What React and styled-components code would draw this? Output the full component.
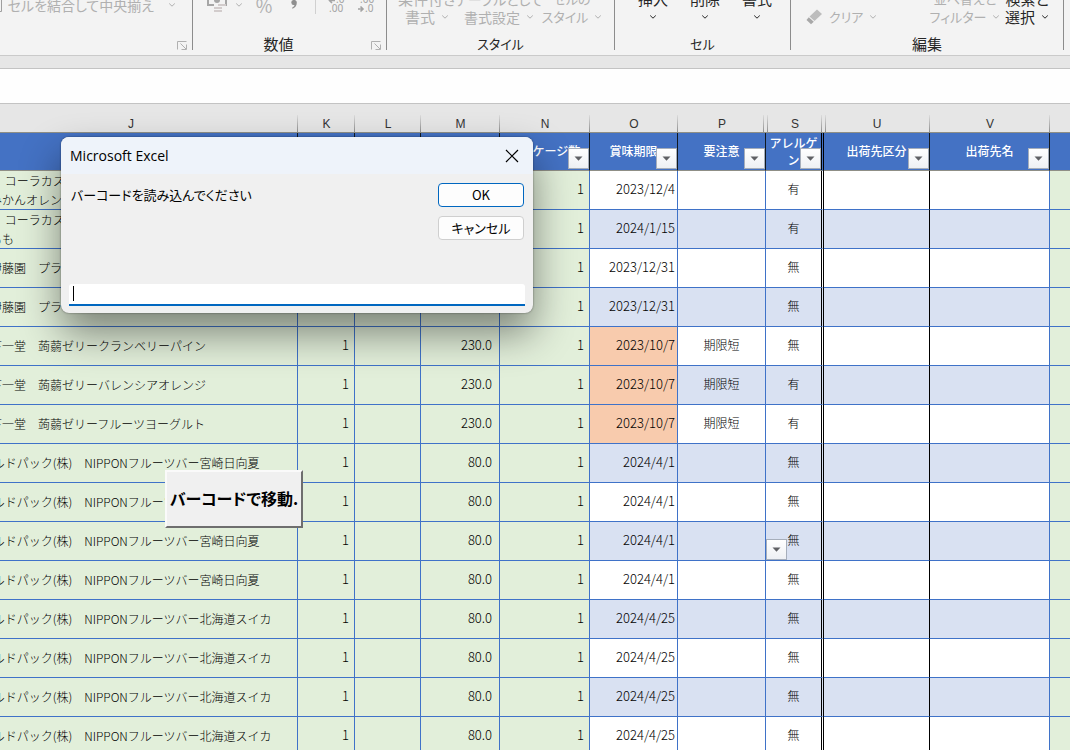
import React from "react";
import styled, { createGlobalStyle, css } from "styled-components";

const GlobalStyles = createGlobalStyle`
  html {
    --line: #3f72c8;
    --head: #4472c4;
    --green: #e2efda;
    --band: #d9e1f2;
    --peach: #f8cbad;
    --chrome: #e6e6e6;
    --ribbon: #f3f3f3;
    --muted: #b0b0b0;
    box-sizing: border-box;
  }
  *, *:before, *:after {
    box-sizing: inherit;
  }
  body {
    margin: 0;
    overflow: hidden;
    font-family: "Noto Sans CJK JP", sans-serif;
    font-size: 12px;
    color: #262626;
  }
  button, input {
    font: inherit;
    color: inherit;
  }
`;

const PageStyles = styled.div`
  position: relative;
  height: 100vh;
  overflow: hidden;
  background: white;
`;

const RibbonStyles = styled.div`
  display: flex;
  height: 56px;
  background: var(--ribbon);
  border-bottom: 1px solid #cacaca;
`;

const GroupStyles = styled.section`
  position: relative;
  display: flex;
  flex-direction: column;
  justify-content: flex-end;
  flex: none;
  width: ${(props) => props.$width}px;
  height: 50px;
  border-right: 1px solid #8c8c8c;
  &:first-child {
    margin-left: -238px;
  }
  h2 {
    margin: 0;
    /* leaves room for the launcher in the corner */
    padding-right: ${(props) => (props.$launcher ? 22 : 0)}px;
    font-size: ${(props) => (props.$kana ? 13 : 15)}px;
    font-weight: 400;
    line-height: 12px;
    text-align: center;
    font-feature-settings: "palt";
  }
`;

const ToolsStyles = styled.div`
  display: flex;
  align-items: ${(props) => (props.$high ? "center" : "flex-end")};
  justify-content: ${(props) => props.$justify || "flex-start"};
  padding: 0 ${(props) => props.$right || 0}px 0 ${(props) => props.$left || 0}px;
  margin-bottom: ${(props) => (props.$high ? 24 : 12)}px;
  gap: ${(props) => props.$gap || 0}px;
  height: 18px;
`;

const ToolPair = styled.span`
  display: flex;
  align-items: flex-end;
`;

const ToolButton = styled.button`
  display: flex;
  flex-direction: ${(props) => (props.$inline ? "row" : "column")};
  align-items: center;
  justify-content: center;
  gap: ${(props) => (props.$inline ? 6 : 0)}px;
  flex: none;
  width: ${(props) => (props.$width ? `${props.$width}px` : "auto")};
  padding: 0;
  border: 0;
  background: none;
  font-size: ${(props) => props.$size || 15}px;
  line-height: 18px;
  white-space: nowrap;
  font-feature-settings: "palt";
  color: ${(props) => (props.$muted ? "var(--muted)" : "#262626")};
  span {
    display: flex;
    align-items: center;
    justify-content: center;
    gap: ${(props) => (props.$wide ? 14 : 6)}px;
    height: 18px;
  }
  svg {
    flex: none;
  }
`;

const ToolDivider = styled.i`
  width: 1px;
  height: 40px;
  align-self: flex-end;
  background: #d0d0d0;
`;

const LauncherButton = styled.button`
  position: absolute;
  right: 4px;
  bottom: 0;
  display: flex;
  padding: 0;
  border: 0;
  background: none;
`;

const FormulaBar = styled.div`
  padding-top: 12px;
  background: var(--chrome);
  input {
    display: block;
    width: 100%;
    height: 36px;
    padding: 0 8px;
    border: 1px solid #c3c3c3;
    border-width: 1px 0;
    background: #fefefe;
    outline: 0;
  }
`;

const SheetStyles = styled.div`
  position: relative;
  margin-left: -36px;
  table {
    width: 100%;
    table-layout: fixed;
    border-collapse: separate;
    border-spacing: 0;
  }
  th:last-child,
  td:last-child {
    border-right: 0;
  }
`;

const separator = "linear-gradient(#dcdcdc, #8f8f8f)";

const LetterCell = styled.th`
  height: 29px;
  padding: 12px 0 0;
  border-bottom: 1px solid #8f8f86;
  background-color: var(--chrome);
  background-image: ${separator}${(props) => props.$after && `, ${separator}`};
  background-repeat: no-repeat;
  background-size: 1px 17px;
  background-position: right ${(props) => (props.$hidden ? 2 : 0)}px bottom 0,
    left ${(props) => (props.$after ? 1 : 0)}px bottom 0;
  font-family: "Liberation Sans", sans-serif;
  font-weight: 400;
  line-height: 16px;
  color: #333;
  &:last-child {
    background-image: none;
  }
`;

const HeadCell = styled.th`
  position: relative;
  height: 38px;
  padding: 0 0 2px;
  border-right: 1px solid #101820;
  border-bottom: 1px solid #8f8f86;
  background: var(--head);
  color: white;
  font-weight: 500;
  line-height: 17px;
  ${(props) =>
    props.$double &&
    css`
      border-right: 3px double black;
    `}
`;

const DropButton = styled.button`
  position: absolute;
  bottom: ${(props) => (props.$left ? 0 : 1)}px;
  ${(props) => (props.$left ? "left: 0;" : "right: 0;")}
  display: grid;
  place-items: center;
  width: 21px;
  height: 21px;
  padding: 0;
  border: 1px solid #a6aebb;
  background: linear-gradient(white, #eef0f4);
`;

const fills = {
  green: "var(--green)",
  peach: "var(--peach)",
  band: "var(--band)",
  white: "white",
};

const CellStyles = styled.td`
  position: relative;
  height: 39px;
  padding: 0 ${(props) => props.$pad || 0}px 2px;
  border-right: 1px solid ${(props) => (props.$dark ? "black" : "var(--line)")};
  border-bottom: 1px solid var(--line);
  background: ${(props) => fills[props.$fill]};
  color: black;
  font-size: ${(props) => (props.$number ? 13 : 12)}px;
  font-weight: 300;
  line-height: 18px;
  text-align: ${(props) => props.$align || "center"};
  ${(props) =>
    props.$double &&
    css`
      border-right: 3px double black;
    `}
`;

const NameCell = styled(CellStyles)`
  padding: 0 0 ${(props) => (props.$wrapped ? 0 : 2)}px 26px;
  line-height: 19px;
  text-align: left;
  white-space: pre;
  overflow: hidden;
`;

const MacroButton = styled.button`
  position: absolute;
  left: 201px;
  top: 366px;
  width: 138px;
  height: 58px;
  padding: 0 0 2px;
  border: 2px solid;
  border-color: #fafafa #6e6e6e #6e6e6e #fafafa;
  background: #f0f0f0;
  color: black;
  font-size: 16px;
  font-weight: 700;
  white-space: nowrap;
  font-feature-settings: "palt";
`;

const DialogStyles = styled.form`
  position: absolute;
  left: 61px;
  top: 137px;
  width: 472px;
  border-radius: 8px;
  background: #f0f0f0;
  color: black;
  box-shadow: 0 0 2px rgba(0, 0, 0, 0.5), 0 20px 40px rgba(0, 0, 0, 0.46);
  header {
    display: flex;
    align-items: center;
    justify-content: space-between;
    height: 37px;
    padding: 0 14px 0 9px;
    border-radius: 8px 8px 0 0;
    background: #eef3fa;
  }
  h1 {
    margin: 0;
    font: 400 14px "Open Sans", sans-serif;
  }
  header button {
    display: flex;
    padding: 0;
    border: 0;
    background: none;
  }
`;

const DialogBody = styled.div`
  display: flex;
  justify-content: space-between;
  height: 110px;
  padding: 9px 9px 0 10px;
  label {
    padding-top: 2px;
    font-size: 13px;
    line-height: 20px;
    font-feature-settings: "palt";
  }
  div {
    display: grid;
    gap: 9px;
    align-content: start;
  }
`;

const DialogButton = styled.button`
  width: 86px;
  height: 24px;
  padding: 0;
  border: 1px solid ${(props) => (props.$primary ? "#0067c0" : "#cfcfcf")};
  border-radius: 4px;
  background: #fdfdfd;
  font-size: 13px;
  line-height: 20px;
  font-feature-settings: "palt";
`;

const EntryStyles = styled.div`
  position: relative;
  padding: 0 8px 7px;
  input {
    display: block;
    width: 100%;
    height: 22px;
    padding: 0 4px;
    border: 0;
    border-bottom: 2px solid #0067c0;
    border-radius: 3px 3px 0 0;
    background: white;
    outline: 0;
  }
  i {
    position: absolute;
    left: 12px;
    top: 2px;
    width: 1px;
    height: 15px;
    background: black;
  }
`;

function Chevron() {
  return (
    <svg width="8" height="6" viewBox="0 0 8 6" fill="none" stroke="currentColor">
      <path d="M1.2 1.5 4 4.2 6.8 1.5" />
    </svg>
  );
}

function Triangle() {
  return (
    <svg width="9" height="5" viewBox="0 0 9 5" fill="#5f6064">
      <path d="M0.5 0.5h8L4.5 4.7z" />
    </svg>
  );
}

function Launcher({ name }) {
  return (
    <LauncherButton type="button" aria-label={name}>
      <svg width="11" height="10" viewBox="0 0 11 10" fill="none" stroke="#b0b0b0">
        <path d="M0.5 9.5v-8h9" />
        <path d="M3.5 3.5l5.5 5.5M9.5 4.5v5h-5" />
      </svg>
    </LauncherButton>
  );
}

function StackedTool({ top, bottom, ...rest }) {
  return (
    <ToolButton type="button" {...rest}>
      <span>{top}</span>
      <span>
        {bottom}
        <Chevron />
      </span>
    </ToolButton>
  );
}

function DecimalIcon({ flip }) {
  return (
    <svg width="18" height="24" viewBox="0 0 18 24" fill="#a3a3a3">
      <g fontFamily="Noto Sans" fontSize="10">
        <text x={flip ? 2 : 8} y="10">{flip ? ".00" : ".0"}</text>
        <text x={flip ? 7 : 1} y="19">{flip ? ".0" : ".00"}</text>
      </g>
      <path
        d={flip ? "M0 16h4M2.5 13.5 5 16l-2.5 2.5" : "M7 7.5H2M4 5 1.5 7.5 4 10"}
        fill="none"
        stroke="#a3a3a3"
        strokeWidth="1.6"
      />
    </svg>
  );
}

function Ribbon() {
  return (
    <RibbonStyles>
      <GroupStyles $width={431} $launcher>
        <ToolsStyles $high $justify="flex-end" $right={16}>
          <ToolButton type="button" $inline $muted $wide $size={14}>
            <svg width="20" height="16" viewBox="0 0 20 16" fill="none" stroke="#9f9f9f">
              <path d="M0.5 0.5h19v14h-19zM12 7.5h4M14 5l2.5 2.5L14 10" />
            </svg>
            <span>
              セルを結合して中央揃え
              <Chevron />
            </span>
          </ToolButton>
        </ToolsStyles>
        <h2>配置</h2>
        <Launcher name="配置の設定" />
      </GroupStyles>

      <GroupStyles $width={194} $launcher>
        <ToolsStyles $high $left={14} $gap={12}>
          <ToolButton type="button" $inline $muted aria-label="通貨">
            <svg width="22" height="20" viewBox="0 0 22 20">
              <path d="M1 1h18v9H1z" fill="none" stroke="#a6a6a6" strokeWidth="2" />
              <circle cx="10" cy="5" r="3" fill="#a6a6a6" />
              <path d="M7 8h9v12H7z" fill="#f3f3f3" />
              <path d="M11 10h8M7 13h8M7 16h8" stroke="#d2cccc" strokeWidth="2" />
            </svg>
            <Chevron />
          </ToolButton>
          <ToolButton type="button" $muted $width={18} $size={18}>
            %
          </ToolButton>
          <ToolButton type="button" $muted $width={18} aria-label="桁区切り">
            <svg width="8" height="12" viewBox="0 0 8 12" fill="#8f8f8f">
              <path d="M4 1a2.5 2.5 0 0 1 2.8 2.7c0 2.8-1.7 4.9-4.3 6l-.5-1c1.4-.7 2.3-1.7 2.5-2.8A2.5 2.5 0 1 1 4 1z" />
            </svg>
          </ToolButton>
          <ToolDivider />
          <ToolButton type="button" $width={18} aria-label="小数点以下の表示桁数を増やす">
            <DecimalIcon />
          </ToolButton>
          <ToolButton type="button" $width={18} aria-label="小数点以下の表示桁数を減らす">
            <DecimalIcon flip />
          </ToolButton>
        </ToolsStyles>
        <h2>数値</h2>
        <Launcher name="表示形式の設定" />
      </GroupStyles>

      <GroupStyles $width={228} $kana>
        <ToolsStyles $left={6}>
          <StackedTool top="条件付き" bottom="書式" $width={68} $muted />
          <StackedTool top="テーブルとして" bottom="書式設定" $width={76} $size={14} $muted />
          <StackedTool top="セルの" bottom="スタイル" $width={70} $size={13} $muted />
        </ToolsStyles>
        <h2>スタイル</h2>
      </GroupStyles>

      <GroupStyles $width={176} $kana>
        <ToolsStyles $left={12}>
          <StackedTool top="挿入" $width={52} />
          <StackedTool top="削除" $width={52} />
          <StackedTool top="書式" $width={52} />
        </ToolsStyles>
        <h2>セル</h2>
      </GroupStyles>

      <GroupStyles $width={273}>
        <ToolsStyles $left={15} $right={8} $justify="space-between">
          <ToolButton type="button" $inline $muted $size={13}>
            <svg width="17" height="16" viewBox="0 0 17 16">
              <path d="M11 0.5 16 5 8.5 12 3.5 7.5z" fill="#bdbdbd" />
              <path d="M2.8 8.2 7.8 12.7 5 15.2 0.5 11z" fill="#a8a8a8" />
            </svg>
            クリア
            <Chevron />
          </ToolButton>
          <ToolPair>
            <StackedTool top="並べ替えと" bottom="フィルター" $width={68} $size={13} $muted />
            <StackedTool top="検索と" bottom="選択" $width={56} />
          </ToolPair>
        </ToolsStyles>
        <h2>編集</h2>
      </GroupStyles>
    </RibbonStyles>
  );
}

const columns = [
  { letter: "J", width: 334 },
  { letter: "K", width: 57 },
  { letter: "L", width: 66 },
  { letter: "M", width: 79 },
  { letter: "N", width: 90, title: "パッケージ数" },
  { letter: "O", width: 88, title: "賞味期限" },
  { letter: "P", width: 88, title: "要注意", hidden: true },
  { letter: "S", width: 58, title: "アレルゲン", hidden: true, after: true, double: true },
  { letter: "U", width: 106, title: "出荷先区分", after: true },
  { letter: "V", width: 120, title: "出荷先名" },
  { letter: "" },
];

const hyuganatsu = " ルドパック(株)　NIPPONフルーツバー宮崎日向夏";
const suika = " ルドパック(株)　NIPPONフルーツバー北海道スイカ";

const rows = [
  { name: "　 コーラカス\nみかんオレン", date: "2023/12/4", allergen: "有" },
  { name: "　 コーラカス\nもも", date: "2024/1/15", allergen: "有" },
  { name: "伊藤園　プラ", date: "2023/12/31", allergen: "無" },
  { name: "伊藤園　プラ", date: "2023/12/31", allergen: "無" },
  { name: "下一堂　蒟蒻ゼリークランベリーパイン", weight: "230.0", date: "2023/10/7", note: "期限短", allergen: "無" },
  { name: "下一堂　蒟蒻ゼリーバレンシアオレンジ", weight: "230.0", date: "2023/10/7", note: "期限短", allergen: "有" },
  { name: "下一堂　蒟蒻ゼリーフルーツヨーグルト", weight: "230.0", date: "2023/10/7", note: "期限短", allergen: "有" },
  { name: hyuganatsu, weight: "80.0", date: "2024/4/1", allergen: "無" },
  { name: hyuganatsu, weight: "80.0", date: "2024/4/1", allergen: "無" },
  { name: hyuganatsu, weight: "80.0", date: "2024/4/1", allergen: "無", picker: true },
  { name: hyuganatsu, weight: "80.0", date: "2024/4/1", allergen: "無" },
  { name: suika, weight: "80.0", date: "2024/4/25", allergen: "無" },
  { name: suika, weight: "80.0", date: "2024/4/25", allergen: "無" },
  { name: suika, weight: "80.0", date: "2024/4/25", allergen: "無" },
  { name: suika, weight: "80.0", date: "2024/4/25", allergen: "無" },
];

function Row({ row, fill }) {
  return (
    <tr>
      <NameCell $fill="green" $wrapped={row.name.includes("\n")}>
        {row.name}
      </NameCell>
      <CellStyles $fill="green" $number $align="right" $pad={5}>
        {row.weight && "1"}
      </CellStyles>
      <CellStyles $fill="green" />
      <CellStyles $fill="green" $number $align="right" $pad={7}>
        {row.weight}
      </CellStyles>
      <CellStyles $fill="green" $number $align="right" $pad={5}>
        1
      </CellStyles>
      <CellStyles $fill={row.note ? "peach" : fill} $number $align="right" $pad={2}>
        {row.date}
      </CellStyles>
      <CellStyles $fill={fill}>{row.note}</CellStyles>
      <CellStyles $fill={fill} $double>
        {row.allergen}
        {row.picker && (
          <DropButton type="button" $left aria-label="リスト">
            <Triangle />
          </DropButton>
        )}
      </CellStyles>
      <CellStyles $fill={fill} $dark />
      <CellStyles $fill={fill} />
      <CellStyles $fill="green" />
    </tr>
  );
}

function Sheet() {
  return (
    <SheetStyles>
      <table>
        <colgroup>
          {columns.map((column) => (
            <col key={column.letter} width={column.width} />
          ))}
        </colgroup>
        <thead>
          <tr>
            {columns.map((column) => (
              <LetterCell key={column.letter} $hidden={column.hidden} $after={column.after}>
                {column.letter}
              </LetterCell>
            ))}
          </tr>
          <tr>
            {columns.map((column) => (
              <HeadCell key={column.letter} $double={column.double}>
                {column.title}
                {column.title && (
                  <DropButton type="button" aria-label={`${column.title}のフィルター`}>
                    <Triangle />
                  </DropButton>
                )}
              </HeadCell>
            ))}
          </tr>
        </thead>
        <tbody>
          {rows.map((row, i) => (
            <Row key={i} row={row} fill={i % 2 ? "band" : "white"} />
          ))}
        </tbody>
      </table>
      <MacroButton type="button">バーコードで移動.</MacroButton>
    </SheetStyles>
  );
}

function BarcodeDialog() {
  return (
    <DialogStyles role="dialog" aria-labelledby="dialog-title" onSubmit={(e) => e.preventDefault()}>
      <header>
        <h1 id="dialog-title">Microsoft Excel</h1>
        <button type="button" aria-label="閉じる">
          <svg width="14" height="14" viewBox="0 0 14 14" stroke="black" strokeWidth="1.2">
            <path d="M1 1l12 12M13 1L1 13" />
          </svg>
        </button>
      </header>
      <DialogBody>
        <label htmlFor="barcode">バーコードを読み込んでください</label>
        <div>
          <DialogButton $primary>OK</DialogButton>
          <DialogButton type="button">キャンセル</DialogButton>
        </div>
      </DialogBody>
      <EntryStyles>
        <input id="barcode" type="text" autoComplete="off" />
        <i />
      </EntryStyles>
    </DialogStyles>
  );
}

export default function App() {
  return (
    <>
      <GlobalStyles />
      <PageStyles>
        <Ribbon />
        <FormulaBar>
          <input type="text" aria-label="数式バー" />
        </FormulaBar>
        <Sheet />
        <BarcodeDialog />
      </PageStyles>
    </>
  );
}
